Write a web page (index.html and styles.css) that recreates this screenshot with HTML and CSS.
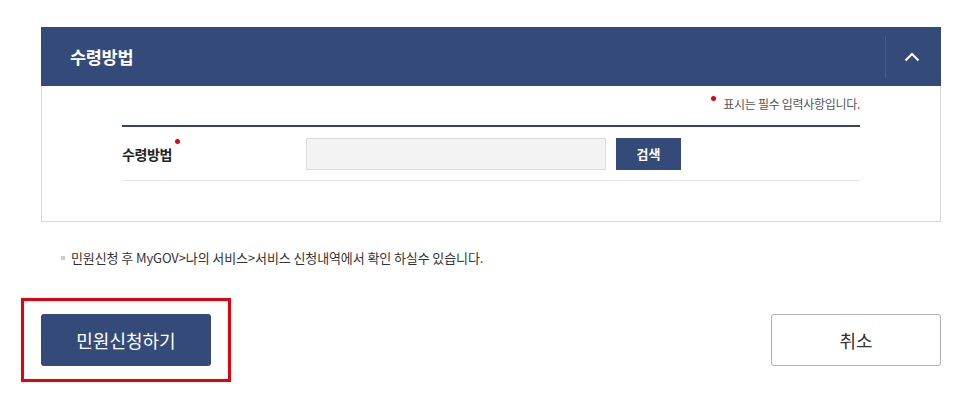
FILE: index.html
```html
<!DOCTYPE html>
<html>
  <head>
    <meta charset="UTF-8">
    <title>수령방법</title>
    <link rel="stylesheet" href="styles.css">
  </head>
  <body>
    <div class="wrap">
      <div class="panel">
        <div class="panel-head">
          <h2>수령방법</h2>
          <button type="button" class="toggle" aria-label="접기">
            <svg width="16" height="10" viewBox="0 0 16 10"><path d="M1.5 8.5 L8 2 L14.5 8.5" fill="none" stroke="#fff" stroke-width="2"/></svg>
          </button>
        </div>
        <div class="panel-body">
          <p class="required-note"><span class="dot"></span>표시는 필수 입력사항입니다.</p>
          <div class="form-table">
            <div class="form-row">
              <label class="form-label">수령방법<span class="dot"></span></label>
              <div class="form-field">
                <input type="text" class="text-input" readonly>
                <button type="button" class="btn-search">검색</button>
              </div>
            </div>
          </div>
        </div>
      </div>

      <p class="notice">민원신청 후 MyGOV&gt;나의 서비스&gt;서비스 신청내역에서 확인 하실수 있습니다.</p>

      <div class="actions">
        <div class="highlight">
          <button type="button" class="btn-primary">민원신청하기</button>
        </div>
        <button type="button" class="btn-cancel">취소</button>
      </div>
    </div>
  </body>
</html>
```

FILE: styles.css
```css
* {
  box-sizing: border-box;
}
body {
  margin: 0;
  background: #fff;
  font-family: "Noto Sans CJK KR", "Noto Sans", sans-serif;
  color: #333;
}
.wrap {
  width: 900px;
  margin-left: 41px;
  padding-top: 27px;
}
.panel {
  border: 1px solid #d9d9d9;
  border-top: 0;
}
.panel-head {
  display: flex;
  align-items: center;
  height: 59px;
  margin: 0 -1px;
  background: #344b7a;
}
.panel-head h2 {
  flex: 1;
  margin: 0;
  padding-left: 29px;
  font-size: 17.5px;
  font-weight: bold;
  color: #fff;
  letter-spacing: -0.3px;
}
.toggle {
  display: flex;
  align-items: center;
  justify-content: center;
  width: 52px;
  height: 42px;
  margin-right: 4px;
  padding: 0;
  border: 0;
  border-left: 1px solid #4a5e8a;
  background: transparent;
  cursor: pointer;
}
.panel-body {
  padding: 6px 80px 40px 80px;
}
.required-note {
  margin: 0;
  text-align: right;
  font-size: 12px;
  letter-spacing: -0.3px;
  color: #555;
  line-height: 24px;
}
.dot {
  display: inline-block;
  width: 5px;
  height: 5px;
  border-radius: 50%;
  background: #e60012;
  vertical-align: top;
}
.required-note .dot {
  margin: 4px 7px 0 0;
}
.form-table {
  margin-top: 9px;
  border-top: 2px solid #344560;
}
.form-row {
  display: flex;
  align-items: center;
  height: 54px;
  border-bottom: 1px solid #e6e6e6;
}
.form-label {
  width: 184px;
  font-size: 14px;
  font-weight: bold;
  color: #222;
  letter-spacing: -0.4px;
}
.form-label .dot {
  margin: -5px 0 0 3px;
}
.form-field {
  display: flex;
  gap: 10px;
}
.text-input {
  width: 300px;
  height: 32px;
  border: 1px solid #dcdcdc;
  background: #f3f3f3;
}
.btn-search {
  width: 65px;
  height: 32px;
  border: 0;
  background: #344b7a;
  color: #fff;
  font-family: inherit;
  font-size: 13px;
  font-weight: bold;
}
.notice {
  margin: 26px 0 0 20px;
  font-size: 13px;
  letter-spacing: -0.1px;
  color: #333;
  line-height: 20px;
}
.notice::before {
  content: "";
  display: inline-block;
  width: 4px;
  height: 4px;
  margin: 0 6px 3px 0;
  background: #ccc;
  vertical-align: middle;
}
.actions {
  display: flex;
  justify-content: space-between;
  align-items: center;
  margin-top: 30px;
}
.highlight {
  margin-left: -20px;
  padding: 13px 17px;
  border: 3px solid #e8000b;
}
.btn-primary {
  display: block;
  width: 170px;
  height: 52px;
  border: 0;
  border-radius: 3px;
  background: #344b7a;
  color: #fff;
  font-family: inherit;
  font-size: 18px;
  cursor: pointer;
}
.btn-cancel {
  width: 170px;
  height: 52px;
  border: 1px solid #b0b0b0;
  border-radius: 3px;
  background: #fff;
  color: #333;
  font-family: inherit;
  font-size: 18px;
  cursor: pointer;
}
```
